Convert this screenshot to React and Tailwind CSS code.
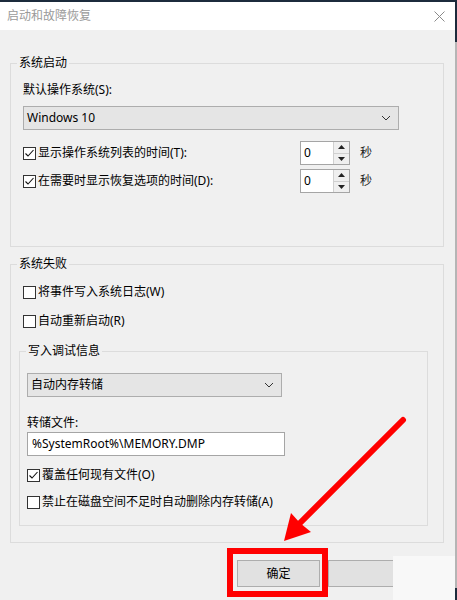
import React from "react";

const FONT = { fontFamily: '"Noto Sans", "Noto Sans CJK SC", sans-serif' };

function Check({ checked }) {
  return (
    <div className="w-[13px] h-[13px] border border-[#333333] bg-white flex items-center justify-center shrink-0">
      {checked && (
        <svg width="11" height="11" viewBox="0 0 11 11">
          <polyline points="1.5,5.5 4,8 9.5,2" fill="none" stroke="#111" strokeWidth="1.1" />
        </svg>
      )}
    </div>
  );
}

function CheckRow({ checked, label, className = "" }) {
  return (
    <div className={"flex items-center h-[16px] " + className}>
      <Check checked={checked} />
      <span className="ml-[2px] text-[12px] leading-[16px] text-black whitespace-nowrap">{label}</span>
    </div>
  );
}

function Chevron() {
  return (
    <svg width="10" height="6" viewBox="0 0 10 6">
      <polyline points="1,1 5,5 9,1" fill="none" stroke="#333" strokeWidth="1" />
    </svg>
  );
}

function Combo({ text, w }) {
  return (
    <div className={"h-[24px] border border-[#adadad] bg-[#e5e5e5] flex items-center justify-between pl-[3px] pr-[7px] " + w}>
      <span className="text-[12px] leading-[16px] text-black">{text}</span>
      <Chevron />
    </div>
  );
}

function Spin() {
  return (
    <div className="w-[50px] h-[24px] border border-[#a5a5a5] bg-white flex">
      <div className="flex-1 flex items-center pl-[3px] text-[12px] leading-[16px] text-black">0</div>
      <div className="w-[16px] flex flex-col border-l border-[#d0d0d0]">
        <div className="flex-1 bg-[#efefef] border-b border-[#d0d0d0] flex items-center justify-center">
          <svg width="7" height="4" viewBox="0 0 7 4"><polygon points="3.5,0 7,4 0,4" fill="#222" /></svg>
        </div>
        <div className="flex-1 bg-[#efefef] flex items-center justify-center">
          <svg width="7" height="4" viewBox="0 0 7 4"><polygon points="0,0 7,0 3.5,4" fill="#222" /></svg>
        </div>
      </div>
    </div>
  );
}

function SpinRow({ label, className = "" }) {
  return (
    <div className={"flex items-center h-[24px] " + className}>
      <div className="w-[277px]">
        <CheckRow checked label={label} />
      </div>
      <Spin />
      <span className="ml-[10px] text-[12px] leading-[16px] text-[#222]">秒</span>
    </div>
  );
}

export default function App() {
  return (
    <div className="w-[457px] h-[600px] flex bg-[#f0f0f0] overflow-hidden relative" style={FONT}>
      <div className="w-[455px] flex flex-col border-t-2 border-[#1c2b3c]">
        <div className="h-[28px] bg-white flex items-center justify-between pl-[7px] pr-[10px]">
          <span className="text-[12px] leading-[16px] text-[#9a9a9a]">启动和故障恢复</span>
          <svg width="11" height="11" viewBox="0 0 11 11">
            <line x1="0.5" y1="0.5" x2="10.5" y2="10.5" stroke="#8a8a8a" strokeWidth="1" />
            <line x1="10.5" y1="0.5" x2="0.5" y2="10.5" stroke="#8a8a8a" strokeWidth="1" />
          </svg>
        </div>
        <div className="pl-[10px] pr-[11px] flex flex-col">
          <fieldset className="mt-[25px] border border-[#dcdcdc] pb-[53px] min-w-0">
            <legend className="ml-[6px] px-[2px] text-[12px] leading-[16px] text-black">系统启动</legend>
            <div className="px-[12px] flex flex-col">
              <div className="mt-[11px] text-[12px] leading-[16px] text-black">默认操作系统(S):</div>
              <div className="mt-[8px]">
                <Combo text="Windows 10" w="w-[376px]" />
              </div>
              <SpinRow className="mt-[11px]" label="显示操作系统列表的时间(T):" />
              <SpinRow className="mt-[4px]" label="在需要时显示恢复选项的时间(D):" />
            </div>
          </fieldset>
          <fieldset className="mt-[9px] border border-[#dcdcdc] pb-[16px] min-w-0">
            <legend className="ml-[6px] px-[2px] text-[12px] leading-[16px] text-black">系统失败</legend>
            <div className="pl-[8px] pr-[15px] flex flex-col">
              <CheckRow className="mt-[12px] ml-[4px]" label="将事件写入系统日志(W)" />
              <CheckRow className="mt-[13px] ml-[4px]" label="自动重新启动(R)" />
              <fieldset className="mt-[14px] border border-[#dcdcdc] pb-[15px] min-w-0">
                <legend className="ml-[6px] px-[2px] text-[12px] leading-[16px] text-black">写入调试信息</legend>
                <div className="px-[7px] flex flex-col">
                  <div className="mt-[14px]">
                    <Combo text="自动内存转储" w="w-[255px]" />
                  </div>
                  <div className="mt-[18px] text-[12px] leading-[16px] text-black">转储文件:</div>
                  <div className="mt-[1px] w-[258px] h-[24px] border border-[#a5a5a5] bg-white flex items-center pl-[4px] text-[12px] leading-[16px] text-black">
                    %SystemRoot%\MEMORY.DMP
                  </div>
                  <CheckRow className="mt-[11px]" checked label="覆盖任何现有文件(O)" />
                  <CheckRow className="mt-[11px]" label="禁止在磁盘空间不足时自动删除内存转储(A)" />
                </div>
              </fieldset>
            </div>
          </fieldset>
        </div>
        <div className="flex items-start pl-[227px] mt-[5px]">
          <div className="border-[6px] border-[#ff0000] pl-[4px] pr-[2px] pt-[6px] pb-[4px]">
            <div className="w-[83px] h-[27px] bg-[#e1e1e1] border border-[#adadad] flex items-center justify-center text-[12px] leading-[16px] text-black">
              确定
            </div>
          </div>
          <div className="mt-[12px] w-[65px] h-[27px] bg-[#e1e1e1] border border-[#adadad] border-r-0" />
          <div className="mt-[8px] flex-1 h-[44px] bg-[#f8f8f8]" />
        </div>
      </div>
      <div className="w-[2px] flex flex-col">
        <div className="h-[42px] bg-[#1c2b3c]" />
        <div className="flex-1 bg-[#b5b5b5]" />
        <div className="h-[12px] bg-[#1c2b3c]" />
      </div>
      <svg className="absolute inset-0 pointer-events-none" width="457" height="600" viewBox="0 0 457 600">
        <line x1="403" y1="420" x2="298" y2="525" stroke="#ff0000" strokeWidth="6" strokeLinecap="round" />
        <polygon points="284,541 291,513 300,523 311,532" fill="#ff0000" />
      </svg>
    </div>
  );
}
